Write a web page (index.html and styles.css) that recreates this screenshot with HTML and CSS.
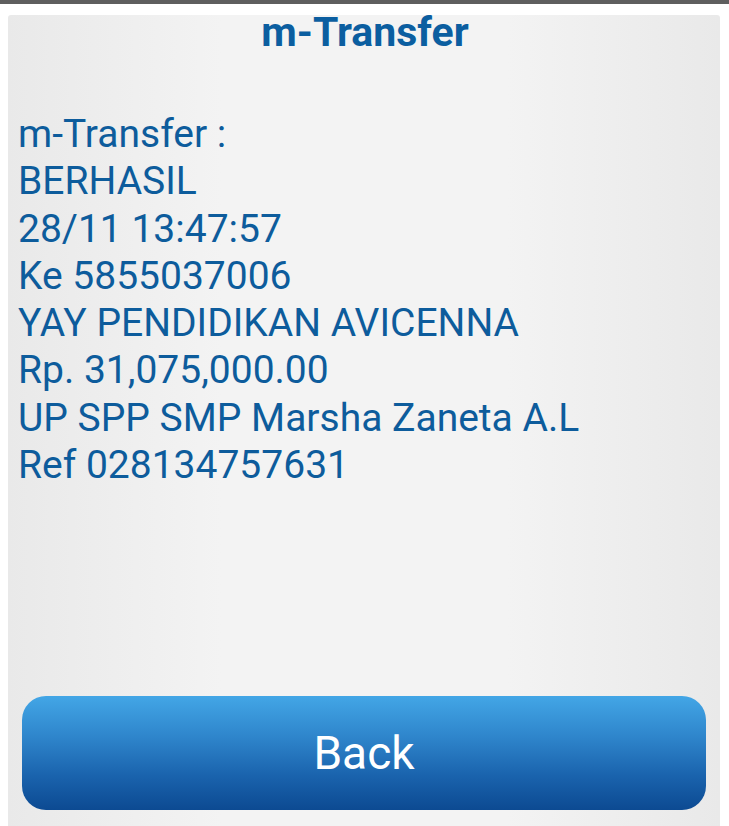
FILE: index.html
```html
<!DOCTYPE html>
<html>
<head>
<meta charset="utf-8">
<link rel="stylesheet" href="styles.css">
</head>
<body>
<div class="topbar"></div>
<div class="card">
  <h1 class="title">m-Transfer</h1>
  <div class="details">
    <div>m-Transfer :</div>
    <div>BERHASIL</div>
    <div>28/11 13:47:57</div>
    <div>Ke 5855037006</div>
    <div>YAY PENDIDIKAN AVICENNA</div>
    <div>Rp. 31,075,000.00</div>
    <div>UP SPP SMP Marsha Zaneta A.L</div>
    <div>Ref 028134757631</div>
  </div>
  <div class="actions">
    <button class="back">Back</button>
  </div>
</div>
</body>
</html>
```
FILE: styles.css
```css
html, body {
  margin: 0;
  padding: 0;
  background: #ffffff;
  font-family: Roboto, "Noto Sans", sans-serif;
  height: 826px;
  overflow: hidden;
}
.topbar {
  height: 4px;
  background: #5f5f5f;
}
.card {
  margin: 11px 9px 0 8px;
  height: 811px;
  background: linear-gradient(90deg, #e9e9e9 0%, #f3f3f3 30%, #f3f3f3 70%, #e9e9e9 100%);
  border-radius: 3px 3px 0 0;
  display: flex;
  flex-direction: column;
}
.title {
  margin: 0;
  text-align: center;
  color: #0b5ea0;
  font-size: 41px;
  font-weight: 700;
  line-height: 34px;
  padding-left: 2px;
}
.details {
  margin-top: 62px;
  padding-left: 10px;
  color: #0d5c9c;
  font-size: 39px;
  line-height: 47.3px;
}
.actions {
  margin-top: auto;
  padding: 0 14px 16px 14px;
}
.back {
  display: block;
  width: 100%;
  height: 114px;
  border: none;
  border-radius: 24px;
  background: linear-gradient(180deg, #43a6e6 0%, #2f86cc 35%, #1a63ad 70%, #0c4a92 100%);
  color: #ffffff;
  font-family: Roboto, "Noto Sans", sans-serif;
  font-size: 46px;
  padding: 0;
}
```
